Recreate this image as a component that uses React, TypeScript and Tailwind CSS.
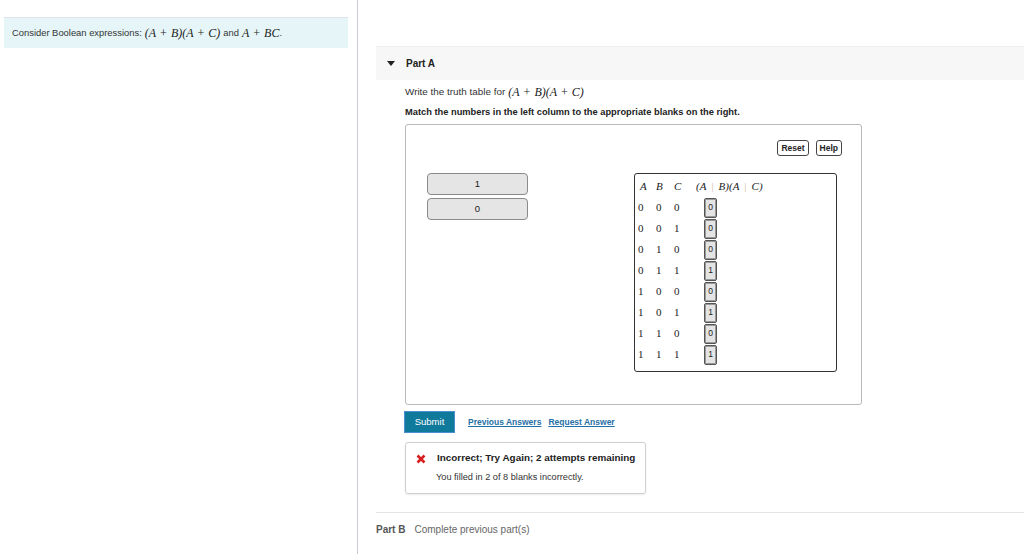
import React from "react";

const rows = [
  ["0", "0", "0", "0"],
  ["0", "0", "1", "0"],
  ["0", "1", "0", "0"],
  ["0", "1", "1", "1"],
  ["1", "0", "0", "0"],
  ["1", "0", "1", "1"],
  ["1", "1", "0", "0"],
  ["1", "1", "1", "1"],
];

const M = ({ children }: { children: React.ReactNode }) => (
  <span className="font-['Liberation_Serif',serif] italic text-[12px] text-[#222]">{children}</span>
);

const P = () => <span className="not-italic px-[4px]">+</span>;

// faint plus as it shows up in the rendered table header
const Faint = () => <span className="not-italic text-[#cdb89c] px-[5px]">|</span>;

export default function App() {
  return (
    <div className="flex h-[554px] w-[1024px] overflow-hidden bg-white font-['Liberation_Sans',Arial,sans-serif] text-[#333]">
      {/* left: problem statement */}
      <aside className="w-[358px] shrink-0 border-r border-[#c9ced6] pl-[4px] pr-[9px] pt-[17px]">
        <div className="flex h-[31px] items-center gap-[3px] border-t border-[#dde3e6] bg-[#e6f6f8] pl-[8px] text-[9.4px] text-[#333]">
          <span>Consider Boolean expressions:</span>
          <M>
            (A<P />B)(A<P />C)
          </M>
          <span>and</span>
          <M>
            A<P />BC
          </M>
          <span className="-ml-[3px]">.</span>
        </div>
      </aside>

      {/* right: parts */}
      <main className="flex flex-1 flex-col pl-[18px] pt-[46px]">
        <div className="flex h-[34px] items-center border-t border-[#eeeeee] bg-[#f7f7f7] pl-[11px]">
          <svg width="8" height="5" viewBox="0 0 8 5" className="mr-[11px]">
            <path d="M0 0 L8 0 L4 5 Z" fill="#222" />
          </svg>
          <span className="text-[10px] font-bold text-[#222]">Part A</span>
        </div>

        <div className="pl-[29px]">
          <p className="mt-[5px] flex h-[14px] items-center gap-[3px] text-[9.9px] text-[#333]">
            <span>Write the truth table for</span>
            <M>
              (A<P />B)(A<P />C)
            </M>
          </p>
          <p className="mt-[6px] h-[14px] text-[9.3px] font-bold leading-[14px] text-[#222]">
            Match the numbers in the left column to the appropriate blanks on the right.
          </p>

          {/* drag and drop box */}
          <div className="mt-[5px] h-[281px] w-[457px] rounded-[3px] border border-[#b8b8b8] pt-[15px]">
            <div className="flex justify-end gap-[7px] pr-[19px]">
              <button className="h-[16px] rounded-[3px] border border-[#444] bg-white px-[3px] text-[8.5px] font-bold leading-[14px] text-[#222]">
                Reset
              </button>
              <button className="h-[16px] rounded-[3px] border border-[#444] bg-white px-[3px] text-[8.5px] font-bold leading-[14px] text-[#222]">
                Help
              </button>
            </div>

            <div className="mt-[17px] flex">
              <div className="ml-[21px] flex w-[101px] flex-col gap-[3px]">
                {["1", "0"].map((v) => (
                  <div
                    key={v}
                    className="flex h-[22px] items-center justify-center rounded-[4px] border border-[#8a8a8a] bg-[#e5e5e5] text-[9.5px] text-[#222]"
                  >
                    {v}
                  </div>
                ))}
              </div>

              <div className="ml-[106px] h-[199px] w-[203px] rounded-[3px] border border-[#333] pl-[3px] pt-[2px] font-['Liberation_Serif',serif] text-[11px] text-[#222]">
                <div className="grid h-[21px] grid-cols-[18px_18px_22px_auto] items-center italic">
                  <span className="pl-[2px]">A</span>
                  <span>B</span>
                  <span>C</span>
                  <span>
                    (A<Faint />B)(A<Faint />C)
                  </span>
                </div>
                {rows.map((r, i) => (
                  <div key={i} className="grid h-[21px] grid-cols-[18px_18px_30px_auto] items-center">
                    <span>{r[0]}</span>
                    <span>{r[1]}</span>
                    <span>{r[2]}</span>
                    <span className="flex h-[20px] w-[13px] items-center justify-center rounded-[2px] border border-[#555] bg-[#e4e4e4] font-['Liberation_Sans',Arial,sans-serif] text-[8.5px] shadow-[inset_0_0_0_1px_#999]">
                      {r[3]}
                    </span>
                  </div>
                ))}
              </div>
            </div>
          </div>

          {/* actions */}
          <div className="mt-[6px] flex items-center">
            <button className="-ml-px h-[22px] w-[51px] border border-[#4a90d0] bg-[#0f7a9b] text-[9.5px] text-white">
              Submit
            </button>
            <a className="ml-[13px] text-[8.5px] font-semibold text-[#1f6fa6] underline">Previous Answers</a>
            <a className="ml-[7px] text-[8.5px] font-semibold text-[#1f6fa6] underline">Request Answer</a>
          </div>

          <div className="mt-[9px] flex h-[52px] w-[241px] flex-col justify-center rounded-[3px] border border-[#cfcfcf] pl-[10px] shadow-[0_1px_2px_rgba(0,0,0,0.08)]">
            <div className="flex items-center">
              <svg width="10" height="10" viewBox="0 0 10 10" className="mr-[11px]">
                <path d="M1.5 1.5 L8.5 8.5 M8.5 1.5 L1.5 8.5" stroke="#d81f1f" strokeWidth="2.6" strokeLinecap="butt" />
              </svg>
              <span className="text-[9.9px] font-bold text-[#222]">Incorrect; Try Again; 2 attempts remaining</span>
            </div>
            <div className="mt-[5px] pl-[20px] text-[9.2px] text-[#333]">You filled in 2 of 8 blanks incorrectly.</div>
          </div>
        </div>

        <div className="mt-[18px] border-t border-[#e3e3e3] pt-[9px] text-[10px]">
          <span className="font-bold text-[#555]">Part B</span>
          <span className="ml-[9px] text-[#666]">Complete previous part(s)</span>
        </div>
      </main>
    </div>
  );
}
